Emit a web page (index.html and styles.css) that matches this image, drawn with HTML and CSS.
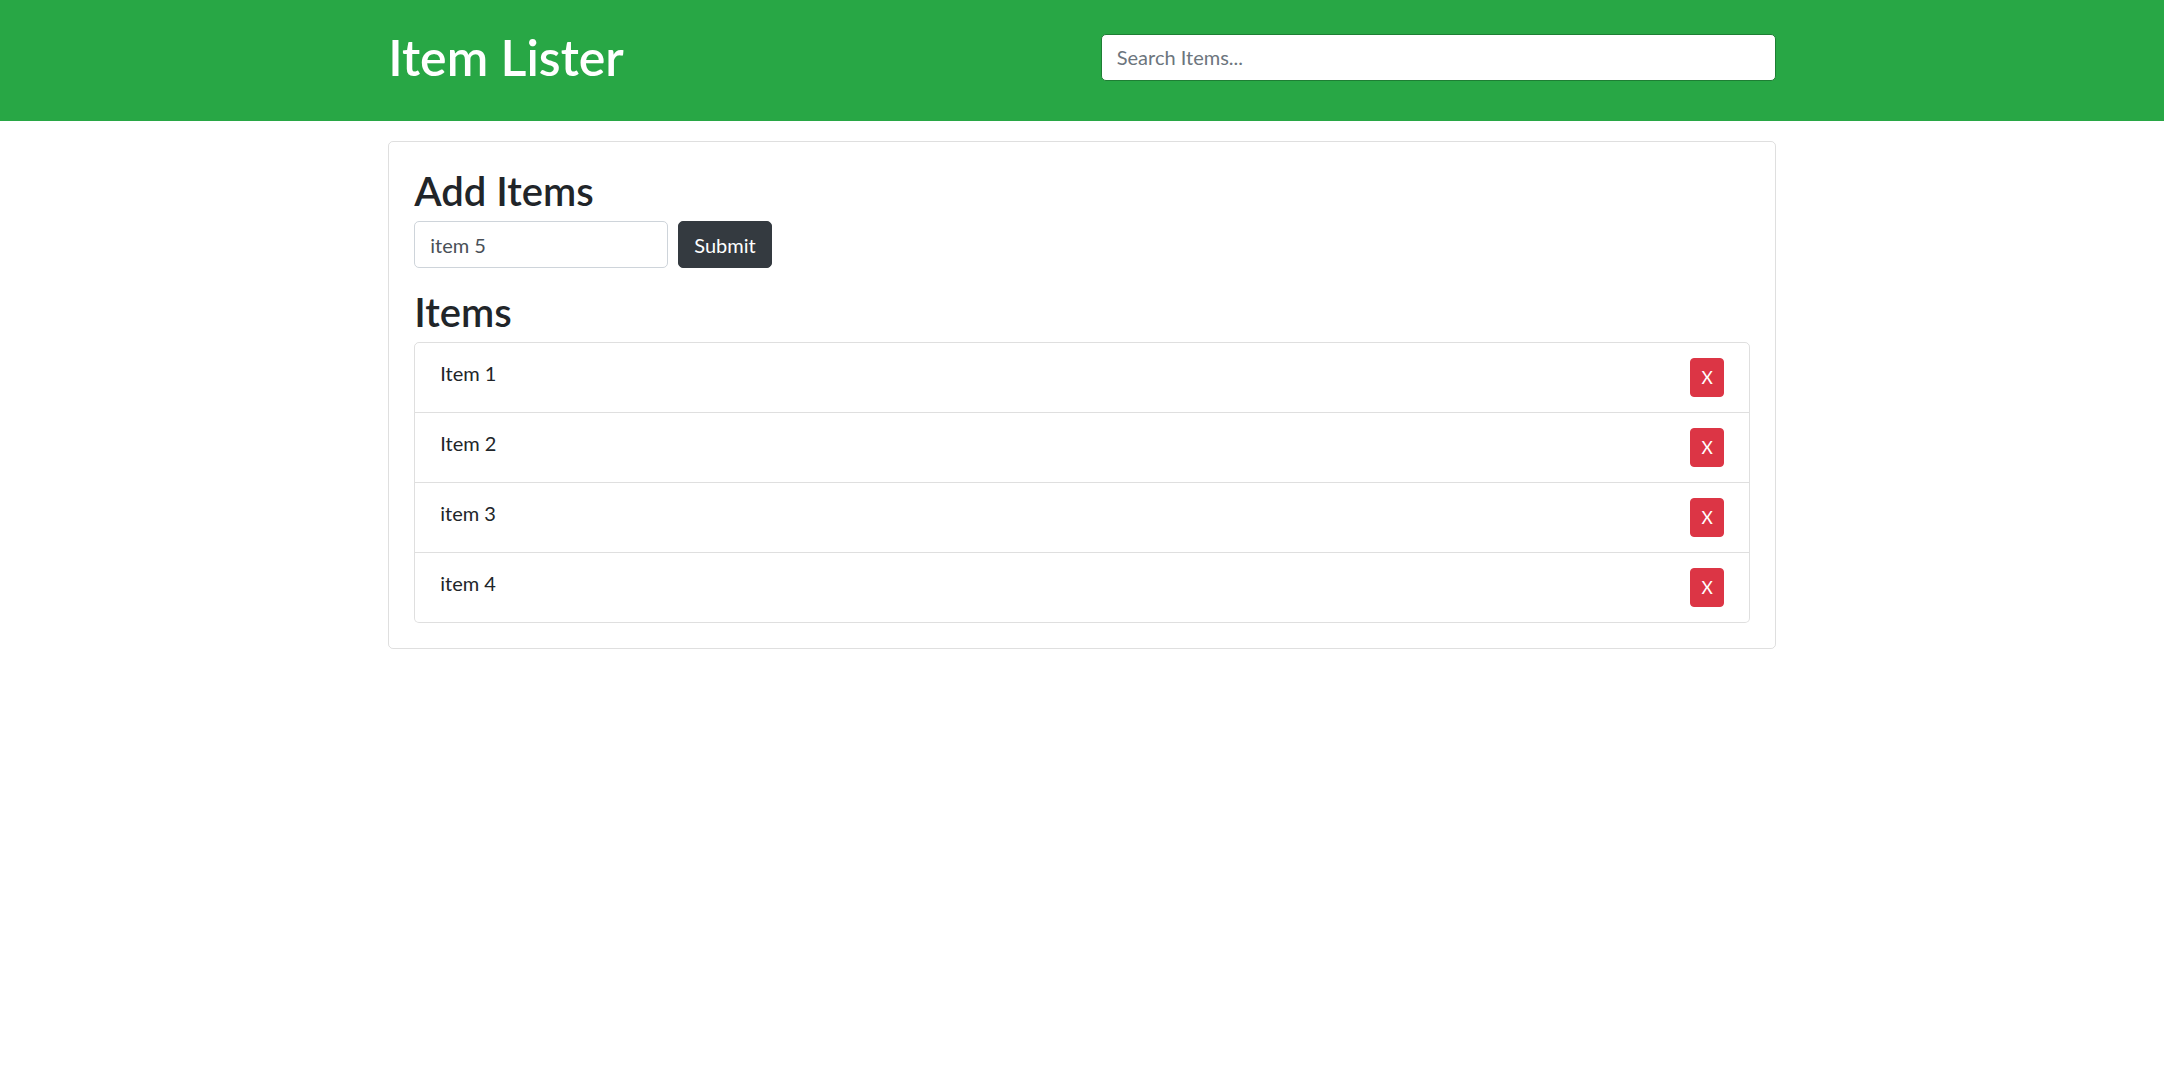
FILE: index.html
```html
<!DOCTYPE html>
<html lang="en">
<head>
    <meta charset="UTF-8">
    <meta name="viewport" content="width=device-width,initial-scale=1">
    <title>Item Lister</title>
    <link rel="stylesheet" href="styles.css">
</head>

<body>
<header class="main-header">
    <div class="container header-row">
        <div class="col">
            <h1 class="header-title">Item Lister</h1>
        </div>
        <div class="col col-center">
            <input type="text" class="form-control" id="filter" placeholder="Search Items...">
        </div>
    </div>
</header>

<div class="container">
    <div class="card">
        <h2 class="title">Add Items</h2>
        <form class="add-form" id="addForm">
            <input type="text" class="form-control add-input" id="item" value="item 5">
            <input type="submit" class="btn btn-dark" value="Submit">
        </form>

        <h2 class="title">Items</h2>
        <ul class="list-group" id="items">
            <li class="list-group-item">Item 1 <button class="btn btn-danger btn-sm delete">X</button></li>
            <li class="list-group-item">Item 2 <button class="btn btn-danger btn-sm delete">X</button></li>
            <li class="list-group-item">item 3 <button class="btn btn-danger btn-sm delete">X</button></li>
            <li class="list-group-item">item 4 <button class="btn btn-danger btn-sm delete">X</button></li>
        </ul>
    </div>
</div>
</body>
</html>
```

FILE: styles.css
```css
* {
    box-sizing: border-box;
}

body {
    margin: 0;
    font-family: Lato, "Liberation Sans", Arial, sans-serif;
    font-size: 20px;
    line-height: 1.5;
    color: #212529;
    background-color: #fff;
}

.container {
    width: 1425px;
    margin: 0 auto;
    padding: 0 18.75px;
}

/* header */
.main-header {
    background-color: #28a745;
    color: #fff;
    padding: 27px 0 34px;
    margin-bottom: 20px;
}

.header-row {
    display: flex;
    gap: 37.5px;
}

.header-row .col {
    flex: 1;
}

.header-row .col-center {
    align-self: center;
}

.header-title {
    margin: 0;
    font-size: 50px;
    font-weight: 600;
    line-height: 60px;
}

/* inputs */
.form-control {
    display: block;
    width: 100%;
    height: 47px;
    padding: 7.5px 15px;
    font-family: inherit;
    font-size: 20px;
    line-height: 30px;
    color: #495057;
    background-color: #fff;
    border: 1px solid #ced4da;
    border-radius: 5px;
    outline: none;
}

.form-control::placeholder {
    color: #6c757d;
}

.main-header .form-control {
    border-color: #1e7e34;
}

.btn {
    display: inline-block;
    font-family: inherit;
    font-size: 20px;
    line-height: 30px;
    padding: 7.5px 15px;
    border: 1px solid transparent;
    border-radius: 5px;
    cursor: pointer;
}

.btn-dark {
    color: #fff;
    background-color: #343a40;
    border-color: #343a40;
}

.btn-danger {
    color: #fff;
    background-color: #dc3545;
    border-color: #dc3545;
}

.btn-sm {
    font-size: 17.5px;
    line-height: 27px;
    padding: 5px 10px;
    border-radius: 4px;
}

/* card */
.card {
    border: 1px solid rgba(0, 0, 0, .125);
    border-radius: 5px;
    padding: 25px;
}

.title {
    margin: 0 0 6px;
    font-size: 40px;
    font-weight: 600;
    line-height: 48px;
}

.add-form {
    display: flex;
    align-items: center;
    gap: 10px;
    margin-bottom: 20px;
}

.add-form .add-input {
    width: 254px;
}

.list-group {
    list-style: none;
    margin: 0;
    padding: 0;
}

.list-group-item {
    display: flex;
    justify-content: space-between;
    align-items: flex-start;
    padding: 15px 25px;
    border: 1px solid rgba(0, 0, 0, .125);
    border-top-width: 0;
}

.list-group-item:first-child {
    border-top-width: 1px;
    border-radius: 5px 5px 0 0;
}

.list-group-item:last-child {
    border-radius: 0 0 5px 5px;
}
```
